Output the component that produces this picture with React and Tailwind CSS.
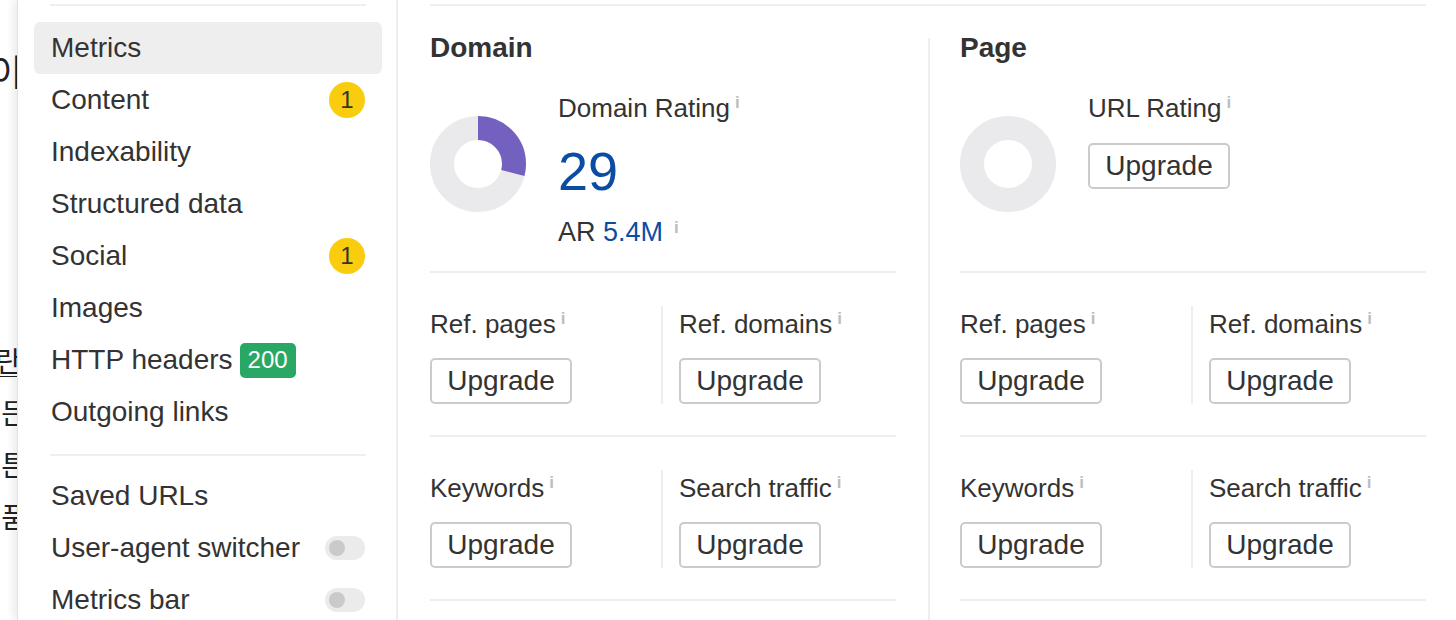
import React from "react";

function Info({ variant = "label" }) {
  const cls =
    variant === "ar"
      ? "ml-[11px] align-[8px] text-[17px] font-bold leading-none text-[#bdbdbd]"
      : "ml-[5px] align-[9px] text-[17px] font-bold leading-none text-[#bdbdbd]";
  return <span className={cls}>i</span>;
}

function Donut({ pct = 0 }) {
  const r = 36;
  const c = 2 * Math.PI * r;
  return (
    <svg width="96" height="96" viewBox="0 0 96 96" className="shrink-0">
      <circle cx="48" cy="48" r={r} fill="none" stroke="#eaeaec" strokeWidth="24" />
      {pct > 0 && (
        <circle
          cx="48"
          cy="48"
          r={r}
          fill="none"
          stroke="#7461bf"
          strokeWidth="24"
          strokeDasharray={`${c * pct} ${c}`}
          transform="rotate(-90 48 48)"
        />
      )}
    </svg>
  );
}

function UpgradeButton() {
  return (
    <button className="h-[46px] w-[142px] rounded-[5px] border-2 border-[#cbcbcb] bg-white text-[28px] leading-none text-[#333]">
      Upgrade
    </button>
  );
}

function MetricCell({ label, first }) {
  return (
    <div className={first ? "w-[233px] shrink-0 border-r-2 border-[#eeeeee]" : "pl-[16px]"}>
      <div className="whitespace-nowrap text-[26px] leading-[36px]">
        {label}
        <Info />
      </div>
      <div className="mt-[16px]">
        <UpgradeButton />
      </div>
    </div>
  );
}

function MetricRow({ a, b }) {
  return (
    <div className="flex border-b-2 border-[#eeeeee] pb-[31px] pt-[33px]">
      <MetricCell label={a} first />
      <MetricCell label={b} />
    </div>
  );
}

function Badge({ children }) {
  return (
    <span className="flex h-[36px] w-[36px] items-center justify-center rounded-full bg-[#f9cd0e] text-[24px] leading-none text-[#333]">
      {children}
    </span>
  );
}

function Toggle() {
  return (
    <span className="flex h-[24px] w-[40px] items-center rounded-full bg-[#ebebeb] px-[4px]">
      <span className="h-[16px] w-[16px] rounded-full bg-[#cacaca]" />
    </span>
  );
}

function NavItem({ label, active, right }) {
  return (
    <div
      className={
        "flex h-[52px] items-center justify-between rounded-[6px] px-[17px] " +
        (active ? "bg-[#eeeeee]" : "")
      }
    >
      <span className="whitespace-nowrap text-[28px] leading-[52px] text-[#333]">{label}</span>
      {right}
    </div>
  );
}

export default function App() {
  return (
    <div className="flex h-[620px] w-[1456px] overflow-hidden bg-white font-['Liberation_Sans',Arial,sans-serif] text-[#333]">
      {/* background page peeking out at the left */}
      <div className="w-[17px] shrink-0 overflow-hidden bg-white font-['Noto_Sans_CJK_KR','Liberation_Sans',sans-serif] text-[#222]">
        <div className="mt-[48px] flex h-[44px] justify-end whitespace-nowrap text-[36px] leading-[44px]">
          <span className="-mr-[6px]">하이</span>
        </div>
        <div className="mt-[242px] flex flex-col items-end whitespace-nowrap text-[28px] leading-[52px]">
          <span className="-mr-[4px] underline decoration-1 underline-offset-4">사란</span>
          <span className="-mr-[10px]">든</span>
          <span className="-mr-[10px]">튼</span>
          <span className="-mr-[10px]">품</span>
        </div>
      </div>

      <div className="flex flex-1 border-l border-[#e2e2e2] shadow-[-4px_0_8px_rgba(0,0,0,0.08)]">
        {/* sidebar */}
        <aside className="w-[380px] shrink-0 border-r-2 border-[#eeeeee] pl-[16px] pr-[14px]">
          <div className="mx-[16px] mt-[4px] h-[2px] bg-[#eeeeee]" />
          <div className="mt-[16px]">
            <NavItem label="Metrics" active />
            <NavItem label="Content" right={<Badge>1</Badge>} />
            <NavItem label="Indexability" />
            <NavItem label="Structured data" />
            <NavItem label="Social" right={<Badge>1</Badge>} />
            <NavItem label="Images" />
            <div className="flex h-[52px] items-center px-[17px]">
              <span className="whitespace-nowrap text-[28px] leading-[52px] text-[#333]">HTTP headers</span>
              <span className="ml-[7px] flex h-[35px] items-center rounded-[5px] bg-[#28a864] px-[8px] text-[24px] leading-none text-white">
                200
              </span>
            </div>
            <NavItem label="Outgoing links" />
          </div>
          <div className="mx-[16px] mb-[14px] mt-[16px] h-[2px] bg-[#eeeeee]" />
          <NavItem label="Saved URLs" />
          <NavItem label="User-agent switcher" right={<Toggle />} />
          <NavItem label="Metrics bar" right={<Toggle />} />
        </aside>

        {/* main */}
        <main className="flex flex-1 flex-col pl-[32px] pr-[30px] pt-[4px]">
          <div className="h-[2px] bg-[#eeeeee]" />
          <div className="mt-[32px] flex flex-1">
            {/* Domain column */}
            <section className="mr-[32px] w-[466px] shrink-0">
              <h2 className="h-[20px] text-[28px] font-bold leading-[20px]">Domain</h2>
              <div className="mt-[35px] flex h-[180px] border-b-2 border-[#eeeeee]">
                <div className="mt-[23px]">
                  <Donut pct={0.29} />
                </div>
                <div className="ml-[32px]">
                  <div className="whitespace-nowrap text-[26px] leading-[30px]">
                    Domain Rating
                    <Info />
                  </div>
                  <div className="mt-[18px] text-[54px] leading-[60px] text-[#0b4da2]">29</div>
                  <div className="mt-[16px] whitespace-nowrap text-[27px] leading-[30px]">
                    AR <span className="text-[#0b4da2]">5.4M</span>
                    <Info variant="ar" />
                  </div>
                </div>
              </div>
              <MetricRow a="Ref. pages" b="Ref. domains" />
              <MetricRow a="Keywords" b="Search traffic" />
            </section>

            {/* Page column */}
            <section className="flex-1 border-l-2 border-[#eeeeee] pl-[30px]">
              <h2 className="h-[20px] text-[28px] font-bold leading-[20px]">Page</h2>
              <div className="mt-[35px] flex h-[180px] border-b-2 border-[#eeeeee]">
                <div className="mt-[23px]">
                  <Donut pct={0} />
                </div>
                <div className="ml-[32px]">
                  <div className="whitespace-nowrap text-[26px] leading-[30px]">
                    URL Rating
                    <Info />
                  </div>
                  <div className="mt-[20px]">
                    <UpgradeButton />
                  </div>
                </div>
              </div>
              <MetricRow a="Ref. pages" b="Ref. domains" />
              <MetricRow a="Keywords" b="Search traffic" />
            </section>
          </div>
        </main>
      </div>
    </div>
  );
}
